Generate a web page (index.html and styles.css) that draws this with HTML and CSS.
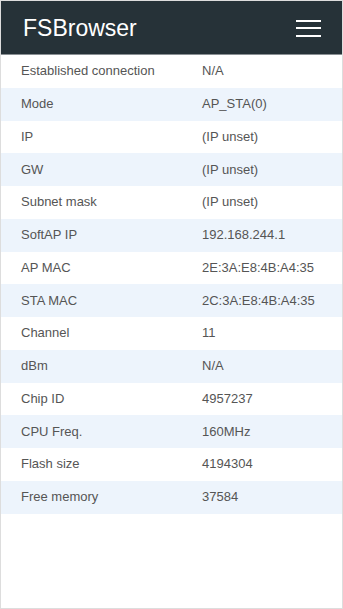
FILE: index.html
```html
<!DOCTYPE html>
<html lang="en">
<head>
    <meta charset="UTF-8">
    <meta name="viewport" content="width=device-width, initial-scale=1.0">
    <title>FSBrowser</title>
    <link rel="stylesheet" href="styles.css">
</head>
<body>
    <div class="page">
        <div class="topbar">
            <span class="brand">FSBrowser</span>
            <button class="menu-btn" aria-label="Menu">
                <span></span><span></span><span></span>
            </button>
        </div>

        <table class="status-table">
            <tr><td>Established connection</td><td>N/A</td></tr>
            <tr><td>Mode</td><td>AP_STA(0)</td></tr>
            <tr><td>IP</td><td>(IP unset)</td></tr>
            <tr><td>GW</td><td>(IP unset)</td></tr>
            <tr><td>Subnet mask</td><td>(IP unset)</td></tr>
            <tr><td>SoftAP IP</td><td>192.168.244.1</td></tr>
            <tr><td>AP MAC</td><td>2E:3A:E8:4B:A4:35</td></tr>
            <tr><td>STA MAC</td><td>2C:3A:E8:4B:A4:35</td></tr>
            <tr><td>Channel</td><td>11</td></tr>
            <tr><td>dBm</td><td>N/A</td></tr>
            <tr><td>Chip ID</td><td>4957237</td></tr>
            <tr><td>CPU Freq.</td><td>160MHz</td></tr>
            <tr><td>Flash size</td><td>4194304</td></tr>
            <tr><td>Free memory</td><td>37584</td></tr>
        </table>
    </div>
</body>
</html>
```

FILE: styles.css
```css
html, body {
    margin: 0;
    height: 100%;
}
body {
    font-family: Arial, "Liberation Sans", sans-serif;
    background-color: #fff;
}
.page {
    box-sizing: border-box;
    height: 609px;
    border: 1px solid #ddd;
}
.topbar {
    display: flex;
    align-items: center;
    justify-content: space-between;
    height: 53px;
    padding: 0 21px 0 22px;
    background-color: #263238;
    border-bottom: 1px solid #8a9094;
}
.brand {
    color: #fff;
    font-size: 23px;
    padding-top: 2px;
}
.menu-btn {
    display: flex;
    flex-direction: column;
    gap: 5.5px;
    padding: 1px 0 0;
    background: none;
    border: none;
    width: 25px;
}
.menu-btn span {
    display: block;
    height: 2px;
    background-color: #fff;
}
.status-table {
    width: 100%;
    border-collapse: collapse;
    font-size: 13px;
    color: #555;
}
.status-table td {
    height: 32.75px;
    padding: 0 0 0 20px;
    line-height: 16px;
}
.status-table td:first-child {
    width: 161px;
}
.status-table tr:nth-child(even) {
    background-color: #edf4fc;
}
```
